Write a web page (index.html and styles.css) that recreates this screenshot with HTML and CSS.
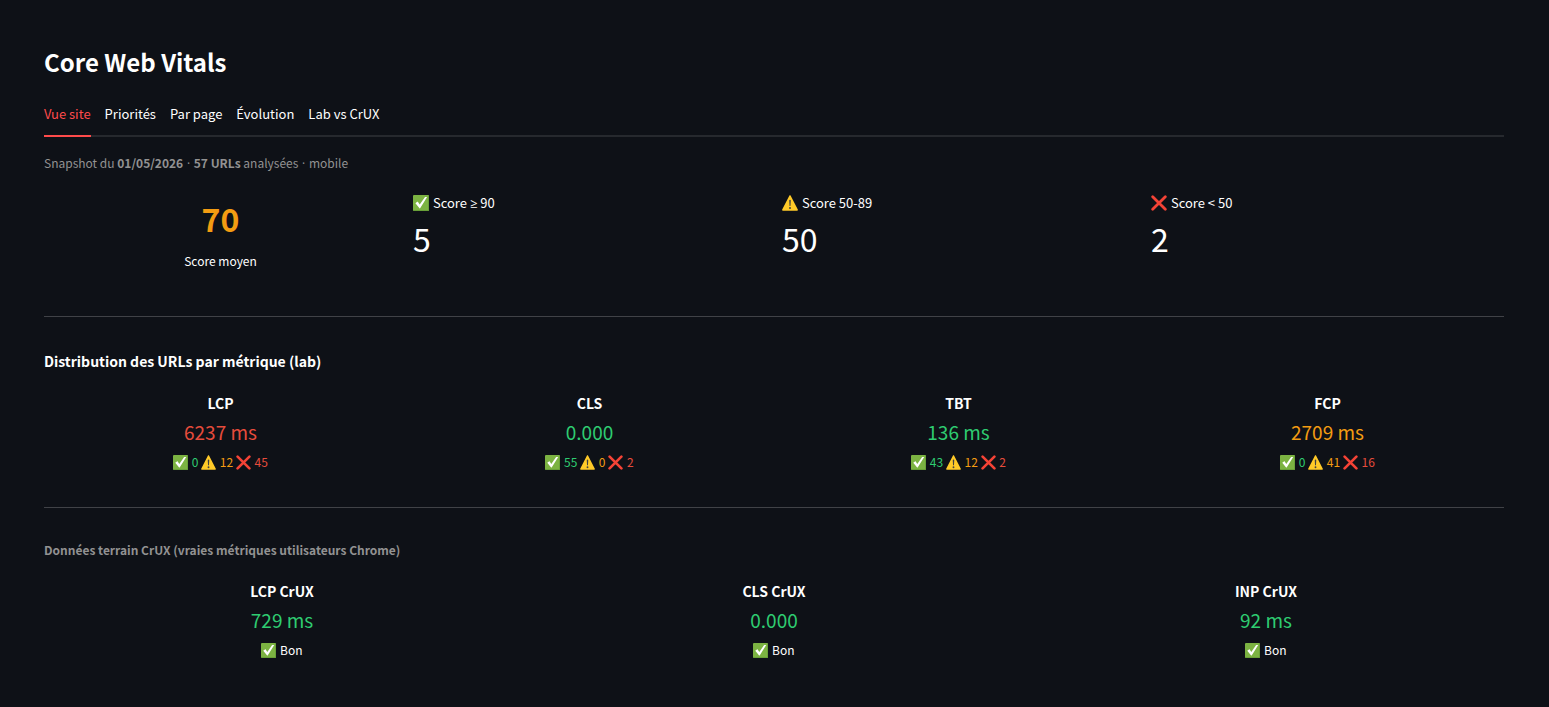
FILE: index.html
```html
<!DOCTYPE html>
<html lang="fr">

<head>
  <meta charset="UTF-8">
  <meta name="viewport" content="width=device-width, initial-scale=1">
  <title>Core Web Vitals</title>
  <link rel="stylesheet" href="styles.css">
</head>

<body>
  <!-- Icônes partagées -->
  <svg class="sprite" aria-hidden="true">
    <symbol id="ok" viewBox="0 0 16 16">
      <rect width="16" height="16" rx="1" fill="#7cb342"/>
      <path d="M.5 15.5h15V.5" fill="none" stroke="#689f38"/>
      <path d="M2.4 8.2 4.2 6.8c.3-.2.6-.2.8.1l1.7 2.7 5-7.2c.2-.3.5-.4.8-.4h1.6L7.3 13.1c-.3.4-.8.4-1 0z" fill="#fff"/>
    </symbol>
    <symbol id="warn" viewBox="0 0 16 16">
      <path d="M7.3.7c.3-.6 1.1-.6 1.4 0l7.1 13.9c.3.6-.1 1.2-.7 1.2H.9c-.6 0-1-.6-.7-1.2z" fill="#ffca28"/>
      <path d="M7.2 5.5c0-.9 1.6-.9 1.6 0l-.3 5.2c0 .5-1 .5-1 0z" fill="#424242"/>
      <circle cx="8" cy="13" r="1" fill="#424242"/>
    </symbol>
    <symbol id="ko" viewBox="0 0 16 16">
      <path d="M1.7 1.7 14.3 14.3M14.3 1.7 1.7 14.3" fill="none" stroke="#f44336" stroke-width="2.8" stroke-linecap="round"/>
    </symbol>
  </svg>

  <div class="container">
    <h1>Core Web Vitals</h1>

    <div class="tabs" role="tablist">
      <button class="tab active" type="button" role="tab" aria-selected="true">Vue site</button>
      <button class="tab" type="button" role="tab" aria-selected="false">Priorités</button>
      <button class="tab" type="button" role="tab" aria-selected="false">Par page</button>
      <button class="tab" type="button" role="tab" aria-selected="false">Évolution</button>
      <button class="tab" type="button" role="tab" aria-selected="false">Lab vs CrUX</button>
    </div>

    <p class="caption">Snapshot du <strong>01/05/2026</strong> <span class="sign dot">·</span> <strong>57 URLs</strong> analysées <span class="sign dot">·</span> mobile</p>

    <div class="grid cols-4 scores">
      <div class="average">
        <div class="average-value orange">70</div>
        <div class="average-label">Score moyen</div>
      </div>
      <div class="stat">
        <div class="label"><svg class="icon"><use href="#ok"/></svg> Score <span class="sign">≥</span> 90</div>
        <div class="stat-value">5</div>
      </div>
      <div class="stat">
        <div class="label"><svg class="icon"><use href="#warn"/></svg> Score 50-89</div>
        <div class="stat-value">50</div>
      </div>
      <div class="stat">
        <div class="label"><svg class="icon"><use href="#ko"/></svg> Score &lt; 50</div>
        <div class="stat-value">2</div>
      </div>
    </div>

    <hr>

    <h2>Distribution des URLs par métrique (lab)</h2>
    <div class="grid cols-4">
      <div class="metric">
        <h3>LCP</h3>
        <div class="value red">6237 ms</div>
        <div class="counts">
          <span class="green"><svg class="icon"><use href="#ok"/></svg> 0</span>
          <span class="orange"><svg class="icon"><use href="#warn"/></svg> 12</span>
          <span class="red"><svg class="icon"><use href="#ko"/></svg> 45</span>
        </div>
      </div>
      <div class="metric">
        <h3>CLS</h3>
        <div class="value green">0.000</div>
        <div class="counts">
          <span class="green"><svg class="icon"><use href="#ok"/></svg> 55</span>
          <span class="orange"><svg class="icon"><use href="#warn"/></svg> 0</span>
          <span class="red"><svg class="icon"><use href="#ko"/></svg> 2</span>
        </div>
      </div>
      <div class="metric">
        <h3>TBT</h3>
        <div class="value green">136 ms</div>
        <div class="counts">
          <span class="green"><svg class="icon"><use href="#ok"/></svg> 43</span>
          <span class="orange"><svg class="icon"><use href="#warn"/></svg> 12</span>
          <span class="red"><svg class="icon"><use href="#ko"/></svg> 2</span>
        </div>
      </div>
      <div class="metric">
        <h3>FCP</h3>
        <div class="value orange">2709 ms</div>
        <div class="counts">
          <span class="green"><svg class="icon"><use href="#ok"/></svg> 0</span>
          <span class="orange"><svg class="icon"><use href="#warn"/></svg> 41</span>
          <span class="red"><svg class="icon"><use href="#ko"/></svg> 16</span>
        </div>
      </div>
    </div>

    <hr>

    <p class="caption crux"><strong>Données terrain CrUX (vraies métriques utilisateurs Chrome)</strong></p>
    <div class="grid cols-3">
      <div class="metric">
        <h3>LCP CrUX</h3>
        <div class="value green">729 ms</div>
        <div class="status"><svg class="icon"><use href="#ok"/></svg> Bon</div>
      </div>
      <div class="metric">
        <h3>CLS CrUX</h3>
        <div class="value green">0.000</div>
        <div class="status"><svg class="icon"><use href="#ok"/></svg> Bon</div>
      </div>
      <div class="metric">
        <h3>INP CrUX</h3>
        <div class="value green">92 ms</div>
        <div class="status"><svg class="icon"><use href="#ok"/></svg> Bon</div>
      </div>
    </div>
  </div>

  <script>
    const tabs = document.querySelectorAll('.tab');

    tabs.forEach(tab => tab.addEventListener('click', function () {
      tabs.forEach(t => {
        t.classList.toggle('active', t === tab);
        t.setAttribute('aria-selected', t === tab);
      });
    }));
  </script>
</body>

</html>
```

FILE: styles.css
```css
* {
  box-sizing: border-box;
}

body {
  font-family: 'Noto Sans CJK SC', 'Noto Sans', sans-serif;
  font-size: 12px;
  line-height: 20px;
  background-color: #0e1117;
  color: #fff;
  margin: 0;
}

.sprite {
  display: none;
}

.container {
  padding: 46px 45px 40px 44px;
}

h1,
h2,
h3,
p {
  margin: 0;
}

h1 {
  font-size: 24px;
  line-height: 32px;
  font-weight: 600;
}

h2 {
  font-size: 14px;
  line-height: 24px;
  font-weight: 600;
  margin-bottom: 15px;
}

.tabs {
  display: flex;
  gap: 14px;
  margin: 19px 0 16px;
  box-shadow: inset 0 -2px #26292e;
}

.tab {
  padding: 7px 0 11px;
  border: none;
  border-bottom: 2px solid transparent;
  background: none;
  color: #fff;
  font-family: inherit;
  font-size: 13px;
  line-height: 20px;
  cursor: pointer;
}

.tab:hover {
  color: #ff4b4b;
}

.tab.active {
  color: #ff4b4b;
  border-bottom-color: #ff4b4b;
}

.caption {
  color: #929292;
}

.caption strong {
  font-weight: 600;
}

/* signes trop larges dans la police CJK */
.sign {
  font-family: 'Open Sans', sans-serif;
  line-height: 1;
}

.dot {
  margin: 0 1px;
}

.crux {
  margin-bottom: 16px;
}

.grid {
  display: grid;
  gap: 16px;
}

.cols-4 {
  grid-template-columns: repeat(4, 1fr);
}

.cols-3 {
  grid-template-columns: repeat(3, 1fr);
}

.scores {
  margin: 20px 0 37px;
}

.average,
.metric {
  text-align: center;
}

.average-value,
.stat-value {
  font-size: 32px;
  line-height: 50px;
}

.average-value {
  font-weight: 700;
}

.average-label {
  line-height: 36px;
}

.label {
  font-size: 13px;
}

.metric h3 {
  font-size: 14px;
  line-height: 30px;
  font-weight: 600;
}

.value {
  font-size: 19px;
  line-height: 28px;
}

.counts,
.status {
  line-height: 32px;
}

.icon {
  width: 15px;
  height: 15px;
  margin-right: 1px;
  vertical-align: -3px;
}

.label .icon {
  width: 16px;
  height: 16px;
}

.green {
  color: #2ecc71;
}

.orange {
  color: #f39c12;
}

.red {
  color: #e74c3c;
}

hr {
  height: 1px;
  margin: 29px 0 32px;
  border: none;
  background-color: #404247;
}
```
